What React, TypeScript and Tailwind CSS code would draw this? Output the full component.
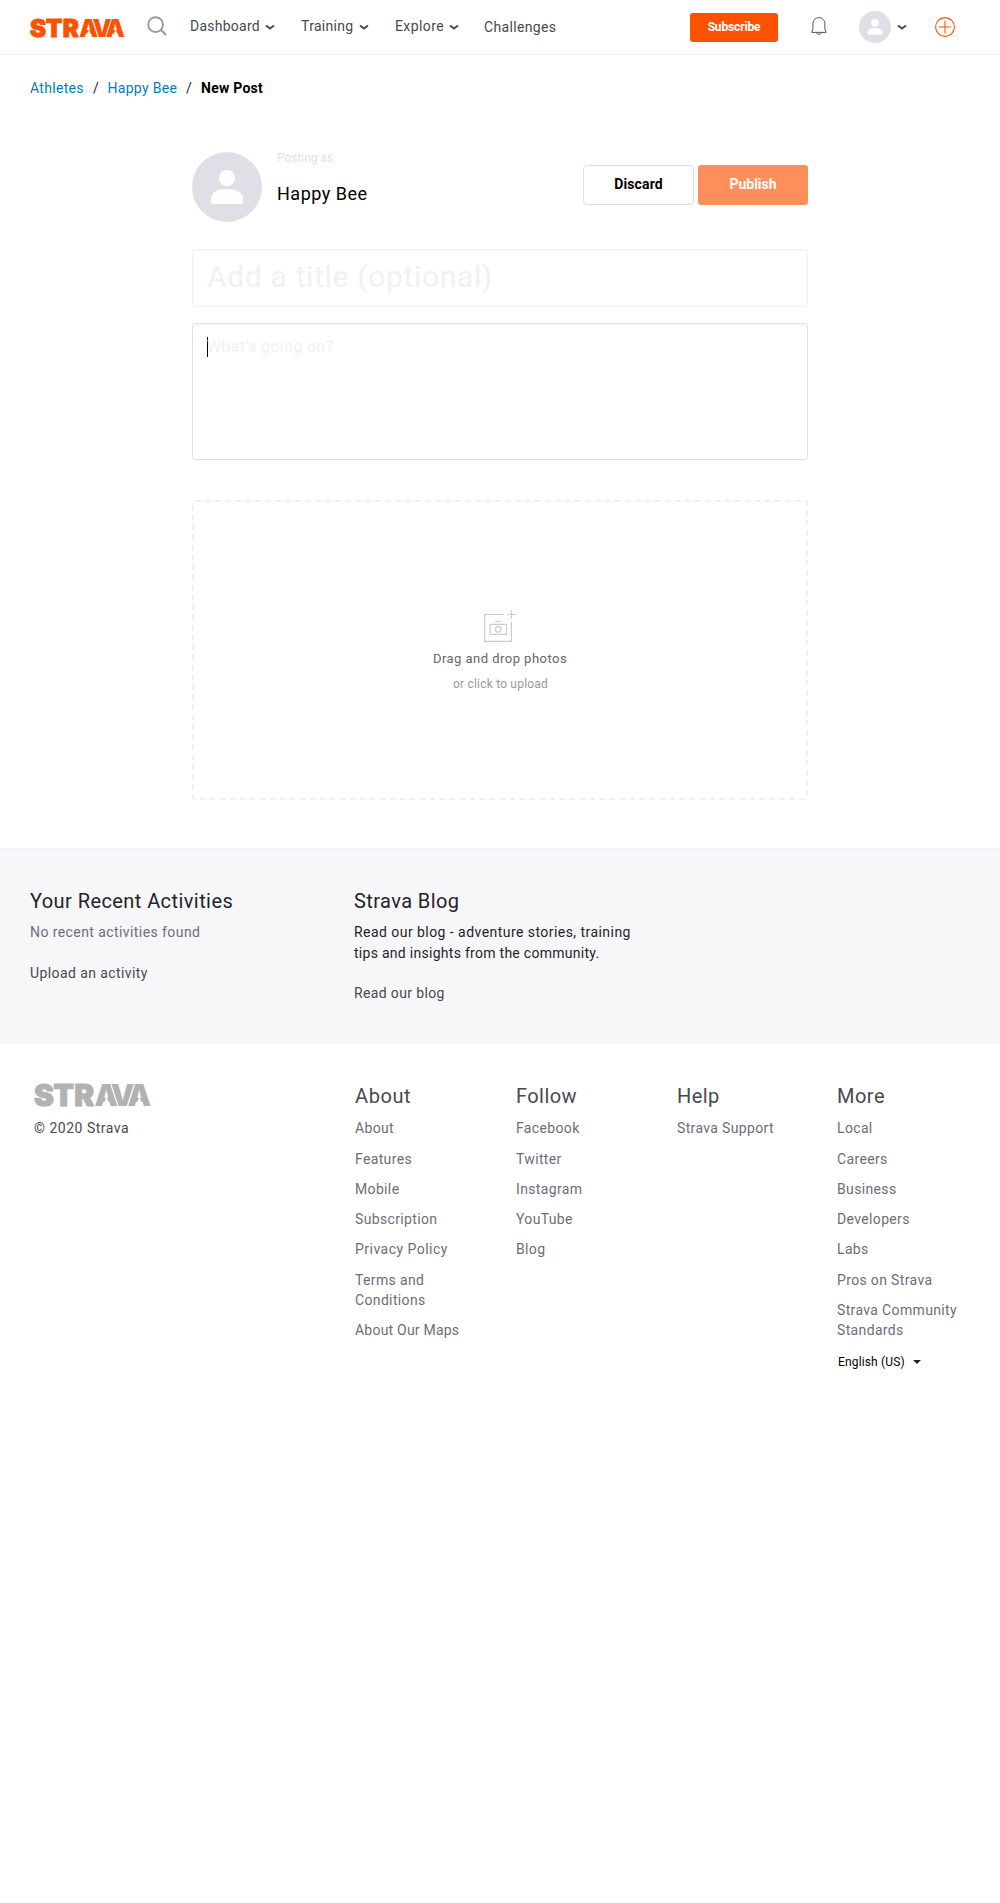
import React from "react";

function Logo({ className }: { className: string }) {
  return (
    <svg viewBox="0 0 116 23" preserveAspectRatio="none" className={`overflow-visible ${className}`} role="img" aria-label="Strava">
      <text
        y="22"
        x="0 19.3 40 60 76.200 92.600"
        fill="currentColor"
        stroke="currentColor"
        strokeWidth="1.1"
        style={{ fontFamily: "Inter, sans-serif", paintOrder: "stroke" }}
        fontSize="29.5"
        fontWeight="900"
      >
        STR
        <tspan stroke="#fff" strokeWidth="2">AVA</tspan>
      </text>
      <path d="M71.9 13 L67.700 23 H76.100Z M104.500 13 L100.300 23 H108.700Z" fill="#fff" />
    </svg>
  );
}

function Chevron() {
  return (
    <svg width="10" height="7" viewBox="0 0 10 7" fill="none" stroke="currentColor" strokeWidth="2" aria-hidden="true">
      <path d="M1 1.5 L5 4.6 L9 1.5" />
    </svg>
  );
}

function Avatar({ className }: { className: string }) {
  return (
    <svg viewBox="0 0 70 70" className={className} aria-hidden="true">
      <circle cx="35" cy="35" r="35" fill="#dfdfe8" />
      <circle cx="35" cy="26" r="8.1" fill="#fff" />
      <path d="M19 47.5C19 40.5 25 37 35 37S51 40.5 51 47.5C51 50 50.6 52 49 52H21C19.4 52 19 50 19 47.5Z" fill="#fff" />
    </svg>
  );
}

function NavItem({ label, className }: { label: string; className: string }) {
  return (
    <a className={`flex h-[53px] items-center justify-between ${className}`}>
      <span>{label}</span>
      <span className="pt-[2px]">
        <Chevron />
      </span>
    </a>
  );
}

function Header() {
  return (
    <header className="flex h-[55px] items-start border-b border-[#f0f0f3] pl-[30px] text-[14px] text-[#494950]">
      <Logo className="mt-[19px] h-[18.5px] w-[95px] shrink-0 text-[#fc5200]" />
      <svg className="mt-4 ml-[22px] shrink-0 text-[#999]" width="20" height="20" viewBox="0 0 20 20" fill="none" stroke="currentColor" strokeWidth="1.9" aria-hidden="true">
        <circle cx="8.6" cy="8.6" r="7.4" />
        <path d="M13.7 13.7 L19 19" strokeWidth="2.2" />
      </svg>
      <nav className="flex">
        <NavItem label="Dashboard" className="ml-[23px] w-[84.5px] tracking-[0.25px]" />
        <NavItem label="Training" className="ml-[26.5px] w-[67.5px] tracking-[0.3px]" />
        <NavItem label="Explore" className="ml-[26.5px] w-[64px] tracking-[0.4px]" />
        <a className="ml-[25px] flex h-[55px] w-[73px] items-center tracking-[0.35px]">Challenges</a>
      </nav>
      <a className="mt-[13px] ml-[133px] flex h-[29px] w-[88px] shrink-0 items-center justify-center rounded-[3px] bg-[#fc5200] pb-px text-[12px] font-bold tracking-[-0.15px] text-white">
        Subscribe
      </a>
      <svg className="mt-[17px] ml-[33px] shrink-0 text-[#55555c]" width="16" height="19" viewBox="0 0 16 19" fill="none" stroke="currentColor" strokeWidth="1" aria-hidden="true">
        <path d="M1.9 12V6.6a6 6 0 0 1 12 0V12l1.2 3.400H.700L1.900 12M6 15.400v1.100a1.200 1 0 0 0 1.200.800h1.400a1.200 1 0 0 0 1.200-.800v-1.100" />
      </svg>
      <Avatar className="mt-[11px] ml-[32px] size-8 shrink-0" />
      <span className="mt-6 ml-[6px] shrink-0">
        <Chevron />
      </span>
      <svg className="mt-[17px] ml-[28px] shrink-0 text-[#fc5200]" width="20" height="20" viewBox="0 0 20 20" fill="none" stroke="currentColor" strokeWidth="1.1" aria-hidden="true">
        <circle cx="10" cy="10" r="9.4" />
        <path d="M10 3.7V16.3M3.7 10H16.3" />
      </svg>
    </header>
  );
}

function Breadcrumb() {
  return (
    <div className="flex h-[67px] items-center pl-[30px] text-[14px] tracking-[0.3px] text-[#242428]">
      <a className="w-[63px] text-[#007fb6]">Athletes</a>
      <span className="w-[14.5px]">/</span>
      <a className="w-[78.5px] text-[#007fb6]">Happy Bee</a>
      <span className="w-[15px]">/</span>
      <b className="font-bold tracking-[0.25px] text-black">New Post</b>
    </div>
  );
}

function PostForm() {
  return (
    <main className="mx-auto mt-[30px] w-[616px]">
      <div className="flex h-[70px]">
        <Avatar className="size-[70px]" />
        <div className="ml-[15px] grow">
          <p className="h-3 text-[12px] leading-[12px] tracking-[-0.05px] text-[#dfdfe8]">Posting as</p>
          <p className="mt-[18px] text-[18px] leading-6 tracking-[0.5px] text-black">Happy Bee</p>
        </div>
        <button className="mt-[13px] h-10 w-[111px] rounded-[4px] border border-[#dfdfe8] pb-px text-[14px] font-bold tracking-[0.15px] text-black">
          Discard
        </button>
        <button className="mt-[13px] ml-1 h-10 w-[110px] rounded-[3px] bg-[#ff8f5a] pb-px text-[14px] font-bold text-white">
          Publish
        </button>
      </div>
      <div className="mt-[27px] flex h-[58px] items-center rounded-[3px] border border-[#f0f0f3] pb-[4px] pl-[14px] text-[30px] tracking-[0.67px] text-[#f0f0f5] shadow-[inset_0_1px_2px_rgba(0,0,0,0.04)]">
        Add a title (optional)
      </div>
      <div className="mt-4 flex h-[137px] items-start rounded-[3px] border border-[#dfdfe8] pt-[13px] pl-[14px] text-[16px] leading-5 tracking-[0.38px] text-[#f0f0f5] shadow-[inset_0_1px_2px_rgba(0,0,0,0.04)]">
        <span className="h-5 w-px bg-black" />
        <span className="-ml-px">What's going on?</span>
      </div>
      <div className="mt-10 flex h-[300px] flex-col items-center rounded-[3px] border-2 border-dashed border-[#f0f0f5]">
        <svg className="mt-[108px]" width="32" height="32" viewBox="0 0 32 32" fill="none" stroke="#ccc" strokeWidth="1.2" aria-hidden="true">
          <path d="M20 4.500H.700V31.300H27.400V12M27.400 0V9M23 4.500H32" />
          <path d="M6 14.300H22.500V24.300H6ZM11 11.500H17" />
          <circle cx="14.300" cy="19.300" r="2.900" />
        </svg>
        <p className="mt-[7px] text-[13px] leading-5 tracking-[0.47px] text-[#666]">Drag and drop photos</p>
        <p className="mt-[5px] pl-px text-[12px] leading-5 tracking-[0.2px] text-[#999]">or click to upload</p>
      </div>
    </main>
  );
}

function Promo() {
  return (
    <section className="mt-12 flex h-[196px] border-t border-[#f0f0f5] bg-[#f7f7fa] pt-10 pl-[30px] text-[14px] leading-[21px] text-[#242428]">
      <div className="w-[324px]">
        <h2 className="text-[20px] leading-6 tracking-[0.42px]">Your Recent Activities</h2>
        <p className="mt-[9px] tracking-[0.42px] text-[#6d6d78]">No recent activities found</p>
        <a className="mt-5 block tracking-[0.41px] text-[#494950]">Upload an activity</a>
      </div>
      <div>
        <h2 className="text-[20px] leading-6 tracking-[0.42px]">Strava Blog</h2>
        <p className="mt-[9px] tracking-[0.45px]">Read our blog - adventure stories, training</p>
        <p className="tracking-[0.28px]">tips and insights from the community.</p>
        <a className="mt-[19px] block tracking-[0.36px] text-[#494950]">Read our blog</a>
      </div>
    </section>
  );
}

const columns = [
  {
    title: "About",
    width: "w-[161px]",
    tracking: "tracking-[0.6px]",
    links: ["About", "Features", "Mobile", "Subscription", "Privacy Policy", "Terms and Conditions", "About Our Maps"],
  },
  { title: "Follow", width: "w-[161px]", tracking: "tracking-[0.42px]", links: ["Facebook", "Twitter", "Instagram", "YouTube", "Blog"] },
  { title: "Help", width: "w-[160px]", tracking: "tracking-[0.42px]", links: ["Strava Support"] },
  {
    title: "More",
    width: "w-[163px]",
    tracking: "tracking-[0.5px]",
    links: ["Local", "Careers", "Business", "Developers", "Labs", "Pros on Strava", "Strava Community Standards"],
  },
];

function Footer() {
  return (
    <footer className="flex items-start pl-[34px] text-[14px] leading-5 text-[#6d6d78]">
      <div className="w-[321px]">
        <Logo className="mt-10 h-[23px] w-[117px] text-[#b2b2b2]" />
        <p className="mt-[11px] tracking-[0.5px] text-[#494950]">© 2020 Strava</p>
      </div>
      {columns.map((c) => (
        <div key={c.title} className={`pt-10 pr-[30px] ${c.width}`}>
          <h3 className={`mb-[10.3px] text-[20px] leading-6 text-[#494950] ${c.tracking}`}>{c.title}</h3>
          <ul className="flex flex-col gap-[10.3px] tracking-[0.35px]">
            {c.links.map((l) => (
              <li key={l} className={l === "About Our Maps" ? "tracking-[0.22px]" : l === "Privacy Policy" ? "tracking-[0.48px]" : ""}>
                {l}
              </li>
            ))}
          </ul>
          {c.title === "More" && (
            <div className="mt-[12px] flex items-center pl-px text-[12px] tracking-[0.15px] whitespace-nowrap text-black">
              English (US)
              <span className="ml-2 border-x-4 border-t-4 border-x-transparent border-t-[#242428]" />
            </div>
          )}
        </div>
      ))}
    </footer>
  );
}

export default function App() {
  return (
    <div className="min-h-[1903px] w-[1000px] bg-white font-['Roboto',sans-serif]">
      <Header />
      <Breadcrumb />
      <PostForm />
      <Promo />
      <Footer />
    </div>
  );
}
